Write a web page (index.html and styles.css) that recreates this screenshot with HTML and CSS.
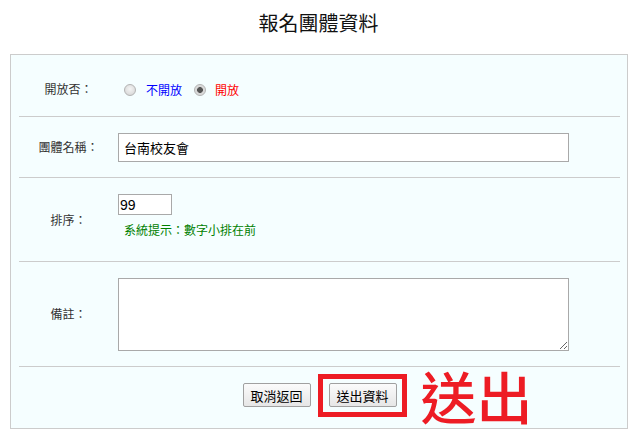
FILE: index.html
```html
<!DOCTYPE html>
<html lang="zh-Hant">
<head>
<meta charset="utf-8">
<title>報名團體資料</title>
<link rel="stylesheet" href="styles.css">
</head>
<body>
<h1 class="title">報名團體資料</h1>
<form class="panel">
  <div class="row row-open">
    <div class="label">開放否：</div>
    <div class="field radios">
      <label class="opt"><input type="radio" name="open" class="radio"><span class="blue">不開放</span></label>
      <label class="opt"><input type="radio" name="open" class="radio" checked><span class="red">開放</span></label>
    </div>
  </div>
  <div class="row">
    <div class="label">團體名稱：</div>
    <div class="field pad">
      <input type="text" class="text-name" value="台南校友會">
    </div>
  </div>
  <div class="row row-sort">
    <div class="label">排序：</div>
    <div class="field pad stack">
      <input type="text" class="text-sort" value="99">
      <div class="hint">系統提示：數字小排在前</div>
    </div>
  </div>
  <div class="row">
    <div class="label">備註：</div>
    <div class="field pad">
      <textarea class="memo"></textarea>
    </div>
  </div>
  <div class="actions">
    <button type="button" class="btn">取消返回</button>
    <span class="mark">
      <button type="submit" class="btn">送出資料</button>
      <span class="note">送出</span>
    </span>
  </div>
</form>
</body>
</html>
```

FILE: styles.css
```css
html, body {
  margin: 0;
  padding: 0;
  background: #fff;
}
body {
  font-family: "Noto Sans CJK TC", "Noto Sans", sans-serif;
  font-size: 12px;
  color: #333;
}
.title {
  margin: 11px 0 19px;
  font-size: 20px;
  line-height: 24px;
  font-weight: normal;
  color: #111;
  text-align: center;
}
.panel {
  margin: 0 9px 0 10px;
  border: 1px solid #cccccc;
  background: #f5feff;
  padding: 6px 7px 6px 8px;
}
.row {
  display: flex;
  border-bottom: 1px solid #cccccc;
}
.label {
  width: 99px;
  flex: none;
  display: flex;
  align-items: center;
  justify-content: center;
  line-height: 14px;
}
.field {
  flex: 1;
}
.pad {
  padding: 16px 0 15px;
}
.row-open {
  height: 55px;
}
.radios {
  display: flex;
  align-items: center;
  padding-top: 2px;
}
.opt {
  display: flex;
  align-items: center;
  margin-right: 12px;
}
.radio {
  -webkit-appearance: none;
  appearance: none;
  width: 12px;
  height: 12px;
  margin: 0 10px 0 6px;
  border-radius: 50%;
  border: 1px solid #b3b3b3;
  background: radial-gradient(circle at 50% 40%, #f4f4f4 0%, #dcdcdc 70%, #cfcfcf 100%);
  box-sizing: border-box;
}
.opt + .opt .radio {
  margin-left: 0;
  margin-right: 9px;
}
.radio:checked {
  background: radial-gradient(circle, #555 0, #555 2.6px, #d6d6d6 3.2px, #e4e4e4 100%);
}
.blue { color: #0000ff; }
.red { color: #ff0000; }
.text-name {
  box-sizing: border-box;
  width: 451px;
  height: 29px;
  margin: 0;
  padding: 0 5px;
  border: 1px solid #a9a9a9;
  background: #fff;
  font-family: "Noto Sans CJK TC", sans-serif;
  font-size: 13px;
  color: #000;
  display: block;
}
.row-sort {
  height: 83px;
}
.stack {
  padding-top: 16px;
}
.text-sort {
  box-sizing: border-box;
  width: 54px;
  height: 21px;
  margin: 0;
  padding: 0 1px;
  border: 1px solid #a9a9a9;
  background: #fff;
  font-family: "Liberation Sans", Arial, sans-serif;
  font-size: 14px;
  color: #000;
  display: block;
}
.hint {
  margin: 9px 0 0 6px;
  color: #008000;
  line-height: 12px;
}
.memo {
  box-sizing: border-box;
  width: 451px;
  height: 73px;
  margin: 0;
  padding: 2px;
  border: 1px solid #a9a9a9;
  background: #fff;
  display: block;
  resize: both;
}
.actions {
  height: 55px;
  display: flex;
  align-items: center;
  justify-content: center;
  gap: 18px;
  padding-top: 1px;
  box-sizing: border-box;
}
.btn {
  box-sizing: border-box;
  width: 68px;
  height: 24px;
  margin: 0;
  padding: 0;
  border: 1px solid #a0a0a0;
  border-radius: 2px;
  background: linear-gradient(#fbfbfb, #e6e6e6);
  font-family: "Noto Sans CJK TC", sans-serif;
  font-size: 13px;
  color: #000;
}
.mark {
  position: relative;
  display: inline-block;
  height: 24px;
}
.mark::after {
  content: "";
  position: absolute;
  left: -11px;
  right: -10px;
  top: -9px;
  bottom: -10px;
  border: 5px solid #ed1c24;
}
.note {
  position: absolute;
  left: 92px;
  top: -20px;
  font-family: "Noto Sans CJK TC", sans-serif;
  font-size: 56px;
  line-height: 64px;
  font-weight: 500;
  color: #ed1c24;
  white-space: nowrap;
}
```
